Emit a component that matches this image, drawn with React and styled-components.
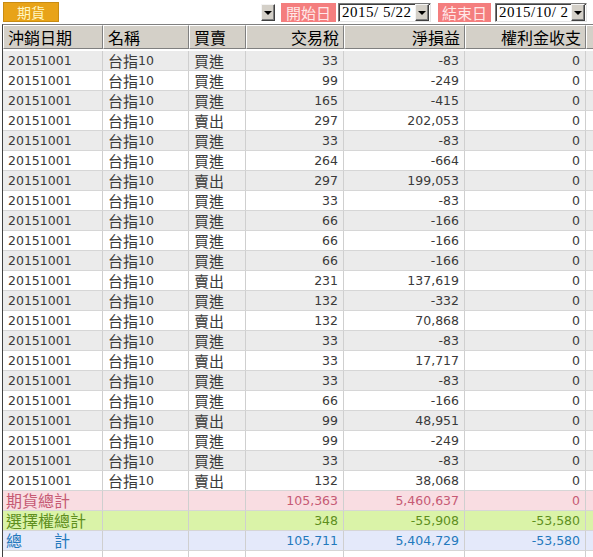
import React from 'react';
import styled, { createGlobalStyle } from 'styled-components';

const GlobalStyle = createGlobalStyle`
  body {
    margin: 0;
    background: #fff;
    font-family: "DejaVu Sans", "Noto Sans CJK TC", sans-serif;
  }
`;

const Page = styled.div`
  width: 593px;
  height: 557px;
  overflow: hidden;
  background: #fff;
`;

const Toolbar = styled.div`
  height: 24px;
  display: flex;
  align-items: center;
`;

const TypeButton = styled.div`
  margin-left: 3px;
  width: 56px;
  height: 20px;
  box-sizing: border-box;
  background: #e8a318;
  border: 1px solid #c98c12;
  color: #fff7c2;
  font-family: "Noto Sans CJK TC", sans-serif;
  font-size: 14px;
  line-height: 18px;
  text-align: center;
`;

const Combo = styled.div`
  width: 216px;
  height: 17px;
  display: flex;
  justify-content: flex-end;
`;

const ArrowButton = styled.div`
  width: 14px;
  height: 17px;
  box-sizing: border-box;
  background: #d4d0c8;
  border-top: 1px solid #f4f4f4;
  border-left: 1px solid #f4f4f4;
  border-right: 1px solid #404040;
  border-bottom: 1px solid #404040;
  box-shadow: inset -1px -1px #808080;
  display: flex;
  align-items: center;
  justify-content: center;
  &::after {
    content: '';
    border-left: 4px solid transparent;
    border-right: 4px solid transparent;
    border-top: 4px solid #000;
    margin-top: 1px;
  }
`;

const DateLabel = styled.div`
  margin-left: ${p => p.$gap}px;
  width: ${p => p.$w}px;
  height: 19px;
  background: #f47e7e;
  color: #ffe8e8;
  font-family: "Noto Sans CJK TC", sans-serif;
  font-size: 15px;
  line-height: 19px;
  text-align: center;
`;

const DateBox = styled.div`
  margin-left: ${p => p.$gap}px;
  width: ${p => p.$w}px;
  height: 19px;
  box-sizing: border-box;
  border-top: 1px solid #7a7a7a;
  border-left: 1px solid #7a7a7a;
  border-right: 1px solid #e4e4e4;
  border-bottom: 1px solid #e4e4e4;
  box-shadow: inset 1px 1px #404040;
  display: flex;
  align-items: center;
  justify-content: space-between;
  padding: 0 1px 0 3px;
`;

const DateText = styled.span`
  font-family: "Liberation Serif", serif;
  font-size: 15px;
  letter-spacing: 0.5px;
  white-space: pre;
  color: #000;
`;

const Frame = styled.div`
  margin-left: 2px;
  border-left: 1px solid #404040;
  border-top: 1px solid #808080;
`;

const cols = '100px 86px 57px 98px 121px 121px 1fr';

const HeadRow = styled.div`
  display: grid;
  grid-template-columns: ${cols};
  height: 26px;
`;

const HeadCell = styled.div`
  box-sizing: border-box;
  background: #d4d0c8;
  border-top: 1px solid #fff;
  border-left: 1px solid #fff;
  border-right: 1px solid #808080;
  border-bottom: 1px solid #808080;
  margin-bottom: 2px;
  font-family: "Noto Sans CJK TC", sans-serif;
  font-size: 16px;
  color: #000;
  line-height: 22px;
  padding: 0 4px;
  text-align: ${p => (p.$right ? 'right' : 'left')};
  white-space: nowrap;
`;

const Row = styled.div`
  display: grid;
  grid-template-columns: ${cols};
  height: 20px;
  background: ${p => p.$bg || '#fff'};
  color: ${p => p.$fg || '#3a3a3a'};
`;

const Cell = styled.div`
  box-sizing: border-box;
  height: 20px;
  border-right: 1px solid #cfcfcf;
  border-bottom: 1px solid #d6d6d6;
  font-size: 12.5px;
  line-height: 19px;
  padding: ${p => (p.$right ? '0 5px 0 0' : `0 0 0 ${p.$pad ?? 5}px`)};
  text-align: ${p => (p.$right ? 'right' : 'left')};
  white-space: nowrap;
`;

const Filler = styled.div`
  border-bottom: 1px solid #d6d6d6;
`;

const Cjk = styled.span`
  font-family: "Noto Sans CJK TC", sans-serif;
  font-size: ${p => p.$size || 15}px;
  line-height: 19px;
  vertical-align: top;
`;

const trades = [
  ['買進', '33', '-83'],
  ['買進', '99', '-249'],
  ['買進', '165', '-415'],
  ['賣出', '297', '202,053'],
  ['買進', '33', '-83'],
  ['買進', '264', '-664'],
  ['賣出', '297', '199,053'],
  ['買進', '33', '-83'],
  ['買進', '66', '-166'],
  ['買進', '66', '-166'],
  ['買進', '66', '-166'],
  ['賣出', '231', '137,619'],
  ['買進', '132', '-332'],
  ['賣出', '132', '70,868'],
  ['買進', '33', '-83'],
  ['賣出', '33', '17,717'],
  ['買進', '33', '-83'],
  ['買進', '66', '-166'],
  ['賣出', '99', '48,951'],
  ['買進', '99', '-249'],
  ['買進', '33', '-83'],
  ['賣出', '132', '38,068'],
];

const totals = [
  { label: '期貨總計', bg: '#f9dde2', fg: '#c65a74', tax: '105,363', pl: '5,460,637', prem: '0' },
  { label: '選擇權總計', bg: '#daf3a8', fg: '#5e8f1e', tax: '348', pl: '-55,908', prem: '-53,580' },
  { label: '總　　計', bg: '#e4e9fa', fg: '#2379bd', tax: '105,711', pl: '5,404,729', prem: '-53,580' },
];

export default function App() {
  return (
    <Page>
      <GlobalStyle />
      <Toolbar>
        <TypeButton>期貨</TypeButton>
        <Combo><ArrowButton /></Combo>
        <DateLabel $gap={6} $w={55}>開始日</DateLabel>
        <DateBox $gap={2} $w={93}>
          <DateText>2015/ 5/22</DateText>
          <ArrowButton />
        </DateBox>
        <DateLabel $gap={7} $w={53}>結束日</DateLabel>
        <DateBox $gap={4} $w={92}>
          <DateText>2015/10/ 2</DateText>
          <ArrowButton />
        </DateBox>
      </Toolbar>
      <Frame>
        <HeadRow>
          <HeadCell>沖銷日期</HeadCell>
          <HeadCell>名稱</HeadCell>
          <HeadCell>買賣</HeadCell>
          <HeadCell $right>交易稅</HeadCell>
          <HeadCell $right>淨損益</HeadCell>
          <HeadCell $right>權利金收支</HeadCell>
          <HeadCell />
        </HeadRow>
        {trades.map(([side, tax, pl], i) => (
          <Row key={i} $bg={i % 2 === 0 ? '#ebebeb' : '#fff'}>
            <Cell>20151001</Cell>
            <Cell><Cjk>台指</Cjk>10</Cell>
            <Cell><Cjk>{side}</Cjk></Cell>
            <Cell $right>{tax}</Cell>
            <Cell $right>{pl}</Cell>
            <Cell $right>0</Cell>
            <Filler />
          </Row>
        ))}
        {totals.map(t => (
          <Row key={t.label} $bg={t.bg} $fg={t.fg}>
            <Cell $pad={3}><Cjk $size={16}>{t.label}</Cjk></Cell>
            <Cell />
            <Cell />
            <Cell $right>{t.tax}</Cell>
            <Cell $right>{t.pl}</Cell>
            <Cell $right>{t.prem}</Cell>
            <Filler />
          </Row>
        ))}
        <Row>
          <Cell />
          <Cell />
          <Cell />
          <Cell />
          <Cell />
          <Cell />
          <Filler />
        </Row>
      </Frame>
    </Page>
  );
}
